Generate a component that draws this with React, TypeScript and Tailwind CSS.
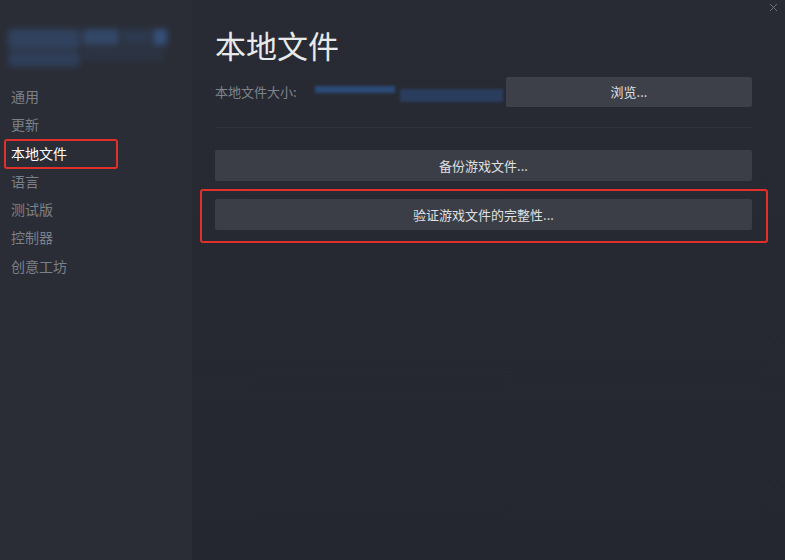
import { X } from "lucide-react";

const NAV = ["通用", "更新", "本地文件", "语言", "测试版", "控制器", "创意工坊"];

const font = { fontFamily: '"Noto Sans CJK SC", "Noto Sans", sans-serif' };

const App = () => {
  return (
    <div className="flex h-[560px] w-[785px] overflow-hidden bg-[#262930] text-[#dcdedf]" style={font}>
      {/* Sidebar */}
      <div className="w-[192px] shrink-0 bg-[#2a2d35]">
        {/* blurred game title */}
        <div className="mt-[29px] ml-[8px] flex h-[40px] w-[162px] gap-[3px] blur-[3px]">
          <div className="flex w-[72px] flex-col gap-[2px]">
            <div className="h-[20px] rounded-sm bg-[#31425e]" />
            <div className="h-[16px] rounded-sm bg-[#2f3e58]" />
          </div>
          <div className="flex flex-1 flex-col gap-[2px]">
            <div className="flex h-[16px] gap-[3px]">
              <div className="w-[36px] bg-[#334868]" />
              <div className="w-[28px] bg-[#2d394e]" />
              <div className="w-[14px] bg-[#35507a]" />
            </div>
            <div className="h-[14px] w-[80px] bg-[#2d3444]" />
          </div>
        </div>

        <div className="mt-[13px] flex flex-col">
          {NAV.map((item) => {
            const active = item === "本地文件";
            return (
              <div key={item} className="relative h-[28.3px] pl-[11px] text-[14px] leading-[28px]">
                <span className={active ? "text-white" : "text-[#7c8088]"}>{item}</span>
                {active && (
                  <div className="absolute left-[4px] top-[0px] h-[30px] w-[114px] rounded-[3px] border-2 border-[#e0302b]" />
                )}
              </div>
            );
          })}
        </div>
      </div>

      {/* Main */}
      <div className="relative flex-1 bg-gradient-to-b from-[#282b33] to-[#24272f] pl-[23px] pr-[33px]">
        <X className="absolute right-[5px] top-[1px] h-[13px] w-[13px] text-[#7d8088]" strokeWidth={1.5} />

        <h1 className="mt-[25px] text-[31px] leading-[40px] text-[#e8e9ea]">本地文件</h1>

        <div className="mt-[12px] flex h-[30px] items-center">
          <span className="text-[13px] text-[#7f838b]">本地文件大小:</span>
          <div className="relative ml-[18px] h-full w-[188px] blur-[1.5px]">
            <div className="absolute left-[0px] top-[9px] h-[7px] w-[80px] bg-[#2c4b78]" />
            <div className="absolute left-[85px] top-[12px] h-[13px] w-[103px] bg-[#2a3d5e]" />
          </div>
          <button className="ml-auto h-[30px] w-[246px] rounded-[2px] bg-[#3d4049] text-[13px] text-[#dfe0e2]">
            浏览...
          </button>
        </div>

        <div className="mt-[20px] h-px bg-[#31343c]" />

        <button className="mt-[22px] h-[31px] w-full rounded-[2px] bg-[#3b3e47] text-[13px] text-[#dfe0e2]">
          备份游戏文件...
        </button>

        <div className="relative mt-[18px]">
          <button className="h-[31px] w-full rounded-[2px] bg-[#3b3e47] text-[13px] text-[#dfe0e2]">
            验证游戏文件的完整性...
          </button>
          <div className="absolute -left-[15px] -right-[16px] -top-[10px] -bottom-[13px] rounded-[3px] border-2 border-[#e0302b]" />
        </div>
      </div>
    </div>
  );
};

export default App;
